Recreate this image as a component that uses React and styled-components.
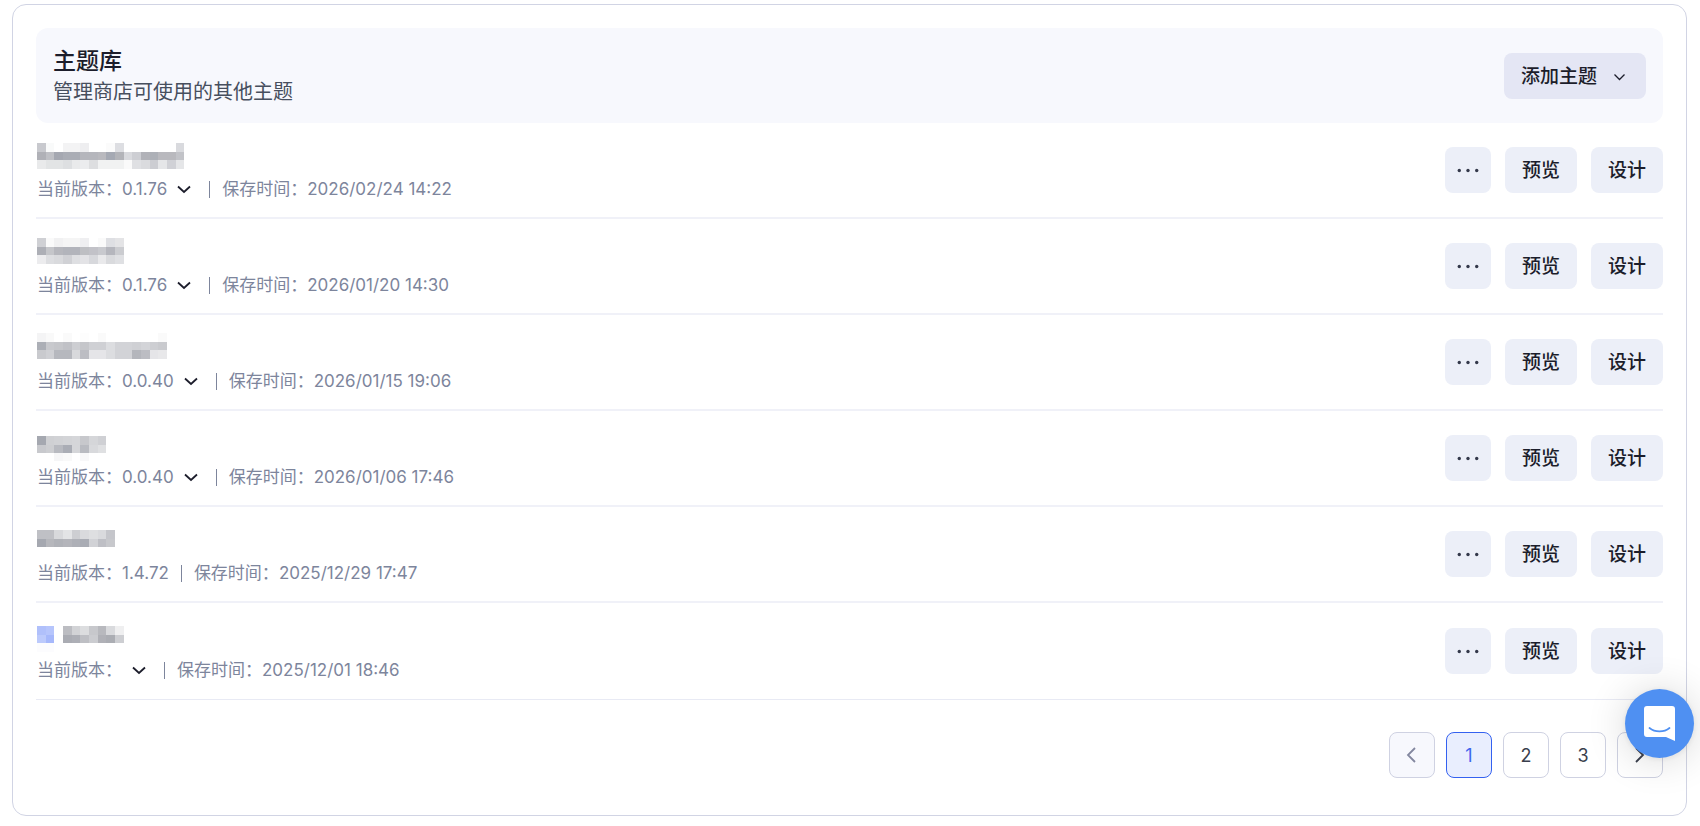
import React, { useState } from "react";
import styled, { createGlobalStyle, css } from "styled-components";

const GlobalStyle = createGlobalStyle`
  * {
    box-sizing: border-box;
  }
  body {
    margin: 0;
    background: #fff;
    color: #1c1d2b;
    font-family: Inter, "Noto Sans CJK SC", sans-serif;
  }
  button {
    font-family: inherit;
    cursor: pointer;
  }
`;
const Page = styled.main`
  padding: 4px 13px 10px 12px;
`;
const Card = styled.section`
  padding: 23px 23px 37px;
  border: 1px solid #d1d4e4;
  border-radius: 14px;
`;
const Header = styled.header`
  display: flex;
  align-items: center;
  justify-content: space-between;
  padding: 17px 17px 16px;
  border-radius: 12px;
  background: #f7f8fd;
`;
const Title = styled.h2`
  margin: 0;
  font-size: 23px;
  font-weight: 500;
  line-height: 32px;
`;
const Description = styled.p`
  margin: 0;
  color: #474f5e;
  font-size: 20px;
  line-height: 30px;
`;
const Button = styled.button`
  display: flex;
  align-items: center;
  justify-content: center;
  gap: 14px;
  height: 46px;
  padding: 1px 17px 0;
  border: 0;
  border-radius: 8px;
  background: ${({ $primary }) => ($primary ? "#e4e6f4" : "#eceff8")};
  color: #1c1d2b;
  font-size: 19px;
  font-weight: 500;
  line-height: 28px;
`;
const MoreButton = styled(Button)`
  width: 46px;
  padding: 0;
`;
const List = styled.ul`
  margin: 0;
  padding: 0;
  list-style: none;
`;
const Row = styled.li`
  display: flex;
  align-items: center;
  justify-content: space-between;
  height: 96px;
  border-bottom: 2px solid #f0f1f8;
  &:last-child {
    height: 97px;
    border-bottom: 1px solid #e8eaf4;
  }
`;
const Info = styled.div`
  padding-left: 1px;
`;
const Name = styled.div`
  height: 38px;
  padding-top: 2px;
`;
const Meta = styled.div`
  display: flex;
  align-items: center;
  height: 28px;
  color: #7d859c;
  font-size: 17px;
  line-height: 28px;
`;
const VersionButton = styled.button`
  display: flex;
  align-items: center;
  gap: 8px;
  padding: 0 4px 0 0;
  border: 0;
  background: none;
  color: inherit;
  font-size: 17px;
  line-height: 28px;
`;
const Separator = styled.span`
  width: 1px;
  height: 17px;
  margin: 0 12px;
  background: #7d859c;
`;
const Actions = styled.div`
  display: flex;
  gap: 14px;
`;
const Pagination = styled.nav`
  display: flex;
  justify-content: flex-end;
  gap: 11px;
  padding-top: 32px;
`;
const PageButton = styled.button`
  display: flex;
  align-items: center;
  justify-content: center;
  width: 46px;
  height: 46px;
  padding: 0;
  border: 1px solid #cfd2e2;
  border-radius: 8px;
  background: #fff;
  color: #3a3f4d;
  font-size: 18px;
  &:disabled {
    background: #f7f8fd;
    color: #83879f;
  }
  ${({ $active }) =>
    $active &&
    css`
      border-color: #3461f0;
      background: #e9eefe;
      color: #3f66ee;
    `}
`;
const ChatButton = styled.button`
  position: fixed;
  right: 6px;
  bottom: 68px;
  width: 69px;
  height: 69px;
  padding: 0;
  border: 0;
  border-radius: 50%;
  background: #4f90f2;
  box-shadow: 0 1px 6px rgba(0, 0, 0, 0.08), 0 2px 40px rgba(0, 0, 0, 0.16);
  svg {
    display: block;
  }
`;

const CELL = 26 / 3;

const themes = [
  {
    version: "0.1.76",
    hasMenu: true,
    savedAt: "2026/02/24 14:22",
    top: 4,
    cells: [
      "c8c9ce f9fafa fff f3f3f4 f3f3f4 eeeef0 fff fff fbfbfb dddee2 fff fff fff fff fff fff d9dade",
      "b0b1b7 bfc0c5 a5a8b1 aaadb5 aaadb5 b5b6bc b5b6bc b9b9be a5a9b3 b3b4b9 d9dade cdced3 b1b2b8 adb0b7 b9b9be b9b9be c2c3c8",
      "e9eaeb e2e4e5 e2e4e5 dddfe1 e9eaeb ebecee dddee0 f1f2f2 f1f2f2 f1f2f2 fafafa dfe0e3 dadbde cccdd2 e5e6e8 d0d1d6 e5e6e8",
    ],
  },
  {
    version: "0.1.76",
    hasMenu: true,
    savedAt: "2026/01/20 14:30",
    top: 3,
    cells: [
      "cfd0d4 fafafa f1f1f2 f5f5f5 f5f5f5 efeff1 fff fafafa dedfe3 e4e4e6",
      "adafb6 c5c6ca b6b7bd b2b4bb b2b4bb bebfc3 c2c2c8 c8c9ce b5b6bd cbccd0",
      "ececee dddee1 d9dadd d0d1d5 dedfe2 e3e3e6 d7d8dc e9e9eb d9dadd dfe0e3",
    ],
  },
  {
    version: "0.0.40",
    hasMenu: true,
    savedAt: "2026/01/15 19:06",
    top: 2,
    cells: [
      "f4f4f5 f9f9f9 fff fafafa fff fdfdfd fff fafafa fff fff fff fff fff fff fafafa",
      "acafb6 c8c9cd c5c6ca c0c1c6 cdced2 c5c6ca cfd0d4 cfd0d4 dcdde0 d2d3d7 d2d3d7 cfd0d4 d3d4d8 cdced2 c9cace",
      "c9cace cfd0d4 b6b8be b6b8be d8d9dc bcbdc3 e5e5e8 e5e5e8 dcdde0 d2d3d7 d2d3d7 b4b6bc bcbdc3 e5e5e8 e8e8ea",
    ],
  },
  {
    version: "0.0.40",
    hasMenu: true,
    savedAt: "2026/01/06 17:46",
    top: 9,
    cells: [
      "a5a8b0 cfd0d3 d1d2d5 d3d4d7 d5d6d9 c7c8cc d5d6d9 cfd0d4",
      "c8c9cd cdced1 b8bac0 aaadb5 d5d6d9 b9bbc1 d8d9dc dfe0e2",
      "fff fff f6f6f7 f9f9f9 fff f8f8f9 fff fff",
    ],
  },
  {
    version: "1.4.72",
    hasMenu: false,
    savedAt: "2025/12/29 17:47",
    top: 7,
    cells: [
      "bfc0c5 bfc0c5 d8d9dc e3e4e6 cdced2 d9dadd dedfe1 d9dadd c5c6cb",
      "a5a8b0 b6b7bc b0b2b8 b4b5bb aeb0b7 a9acb4 d1d2d6 bebfc5 c7c8cc",
    ],
  },
  {
    version: "",
    hasMenu: true,
    savedAt: "2025/12/01 18:46",
    top: 6,
    cells: [
      "b0c0fb b6c5fc fff bcbdc2 d2d3d6 dcdddf c7c8cc b8b9be d9dadd efeff0",
      "bccafc a6b8fb fff aaacb3 adafb6 bebfc4 cbccd0 b0b1b7 abadb3 cdced2",
      "fcfcfe fcfcfe fff fff fff fff fff fff fff fff",
    ],
  },
];

// theme names are masked with a coarse mosaic
function MaskedName({ cells, top }) {
  const rows = cells.map((row) => row.split(" "));
  return (
    <svg width="150" height="34" shapeRendering="crispEdges" aria-hidden="true">
      {rows.map((row, y) =>
        row.map((color, x) => (
          <rect
            key={`${x}-${y}`}
            x={x * CELL}
            y={top + y * CELL}
            width={CELL}
            height={CELL}
            fill={`#${color}`}
          />
        ))
      )}
    </svg>
  );
}

function Chevron({ stroke = 1.8, color = "currentColor", d = "M3 6.5l6 5.5 6-5.5" }) {
  return (
    <svg
      width="18"
      height="18"
      viewBox="0 0 18 18"
      fill="none"
      stroke={color}
      strokeWidth={stroke}
      aria-hidden="true"
    >
      <path d={d} />
    </svg>
  );
}

function ThemeRow({ theme }) {
  return (
    <Row>
      <Info>
        <Name>
          <MaskedName cells={theme.cells} top={theme.top} />
        </Name>
        <Meta>
          <span>当前版本：</span>
          {theme.hasMenu ? (
            <VersionButton type="button" aria-label={`切换版本 ${theme.version}`}>
              <span>{theme.version}</span>
              <Chevron color="#1c1d2b" />
            </VersionButton>
          ) : (
            <span>{theme.version}</span>
          )}
          <Separator />
          <span>保存时间：</span>
          <time>{theme.savedAt}</time>
        </Meta>
      </Info>
      <Actions>
        <MoreButton type="button" aria-label="更多">
          <svg width="22" height="6" fill="#33384a" aria-hidden="true">
            <circle cx="2.3" cy="3.5" r="1.7" />
            <circle cx="11" cy="3.5" r="1.7" />
            <circle cx="19.7" cy="3.5" r="1.7" />
          </svg>
        </MoreButton>
        <Button type="button">预览</Button>
        <Button type="button">设计</Button>
      </Actions>
    </Row>
  );
}

function App() {
  const [page, setPage] = useState(1);
  return (
    <Page>
      <GlobalStyle />
      <Card>
        <Header>
          <div>
            <Title>主题库</Title>
            <Description>管理商店可使用的其他主题</Description>
          </div>
          <Button type="button" $primary>
            添加主题
            <Chevron stroke={1.3} d="M3.5 6.5l5 5 5-5" />
          </Button>
        </Header>
        <List>
          {themes.map((theme) => (
            <ThemeRow key={theme.savedAt} theme={theme} />
          ))}
        </List>
        <Pagination aria-label="分页">
          <PageButton
            type="button"
            aria-label="上一页"
            disabled={page === 1}
            onClick={() => setPage(page - 1)}
          >
            <Chevron d="M12 2L5 9l7 7" />
          </PageButton>
          {[1, 2, 3].map((n) => (
            <PageButton key={n} type="button" $active={n === page} onClick={() => setPage(n)}>
              {n}
            </PageButton>
          ))}
          <PageButton
            type="button"
            aria-label="下一页"
            disabled={page === 3}
            onClick={() => setPage(page + 1)}
          >
            <Chevron d="M5 2l7 7-7 7" />
          </PageButton>
        </Pagination>
      </Card>
      <ChatButton type="button" aria-label="在线客服">
        <svg width="69" height="69" viewBox="0 0 69 69" aria-hidden="true">
          <path
            d="M22 17h25a3 3 0 0 1 3 3v32l-9-4H22a3 3 0 0 1-3-3V20a3 3 0 0 1 3-3z"
            fill="#fff"
          />
          <path
            d="M24.5 39c5.500 4.500 14.500 4.500 20 0"
            fill="none"
            stroke="#4f90f2"
            strokeWidth="1.8"
            strokeLinecap="round"
          />
        </svg>
      </ChatButton>
    </Page>
  );
}

export default App;
